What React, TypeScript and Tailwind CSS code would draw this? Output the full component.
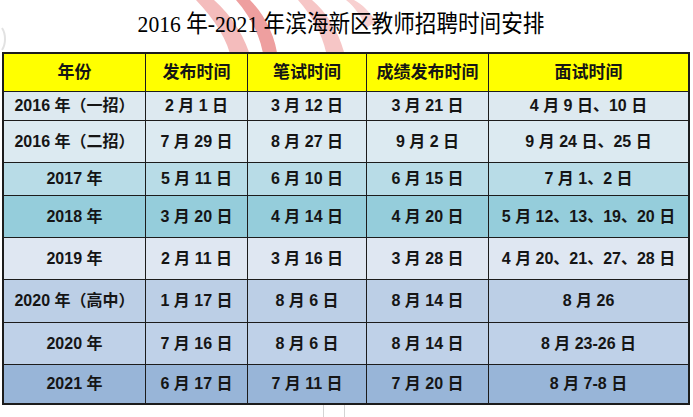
const header = ["年份", "发布时间", "笔试时间", "成绩发布时间", "面试时间"];

const rows: { bg: string; cells: string[] }[] = [
  { bg: "bg-[#dde9f0]", cells: ["2016 年（一招）", "2 月 1 日", "3 月 12 日", "3 月 21 日", "4 月 9 日、10 日"] },
  { bg: "bg-[#dceaf1]", cells: ["2016 年（二招）", "7 月 29 日", "8 月 27 日", "9 月 2 日", "9 月 24 日、25 日"] },
  { bg: "bg-[#b8dce7]", cells: ["2017 年", "5 月 11 日", "6 月 10 日", "6 月 15 日", "7 月 1、2 日"] },
  { bg: "bg-[#95cddb]", cells: ["2018 年", "3 月 20 日", "4 月 14 日", "4 月 20 日", "5 月 12、13、19、20 日"] },
  { bg: "bg-[#dfe7f2]", cells: ["2019 年", "2 月 11 日", "3 月 16 日", "3 月 28 日", "4 月 20、21、27、28 日"] },
  { bg: "bg-[#bccfe6]", cells: ["2020 年（高中）", "1 月 17 日", "8 月 6 日", "8 月 14 日", "8 月 26"] },
  { bg: "bg-[#bfd1e8]", cells: ["2020 年", "7 月 16 日", "8 月 6 日", "8 月 14 日", "8 月 23-26 日"] },
  { bg: "bg-[#98b5d8]", cells: ["2021 年", "6 月 17 日", "7 月 11 日", "7 月 20 日", "8 月 7-8 日"] },
];

function Watermark() {
  // faint logo behind the title
  return (
    <svg
      className="pointer-events-none absolute left-0 top-0"
      width="693"
      height="120"
      viewBox="0 0 693 120"
      fill="none"
    >
      <path d="M196 0 C215 20 228 40 232 62 L252 62 C246 38 232 16 214 0 Z" fill="#f4bcbc" />
      <path d="M236 0 C252 18 262 40 264 60 L278 60 C276 36 264 14 250 0 Z" fill="#ee9f9f" />
      <path d="M298 0 C312 16 322 34 326 52 L344 52 C338 30 326 12 312 0 Z" fill="#f6c6c6" />
      <path d="M346 0 C356 8 362 18 366 28 L376 22 C370 12 362 4 354 0 Z" fill="#f8d0d0" />
      <path d="M2 28 C6 34 6 44 2 50" stroke="#e2e2e2" strokeWidth="2" />
    </svg>
  );
}

export default function App() {
  return (
    <div className="relative h-[417px] w-[693px] overflow-hidden bg-white">
      <Watermark />
      <div className="relative flex h-[52px] items-center justify-center pb-[4px] pr-[12px]">
        <h1
          className="scale-x-90 text-[24px] font-normal leading-none text-black"
          style={{ fontFamily: '"Liberation Serif", "Noto Sans CJK SC", serif' }}
        >
          2016 年-2021 年滨海新区教师招聘时间安排
        </h1>
      </div>
      <div className="relative ml-[2px] w-[688px] border-2 border-[#1c1c1c] bg-[#1c1c1c]">
        <div
          className="grid grid-cols-[141px_101px_118px_121px_199px] grid-rows-[37px_28px_41px_32px_41px_41px_42px_41px_38px] gap-px font-bold text-[#151515]"
          style={{ fontFamily: '"Liberation Sans", "Noto Sans CJK SC", sans-serif' }}
        >
          {header.map((h) => (
            <div key={h} className="flex items-center justify-center bg-[#ffff00] text-[17px]">
              {h}
            </div>
          ))}
          {rows.map((r) =>
            r.cells.map((c, i) => (
              <div
                key={r.cells[0] + i}
                className={`flex items-center justify-center whitespace-nowrap text-[16px] ${r.bg}`}
              >
                {c}
              </div>
            )),
          )}
        </div>
      </div>
      <div className="ml-[323px] h-[12px] w-[22px] border-x border-[#d4d4d4]" />
    </div>
  );
}
